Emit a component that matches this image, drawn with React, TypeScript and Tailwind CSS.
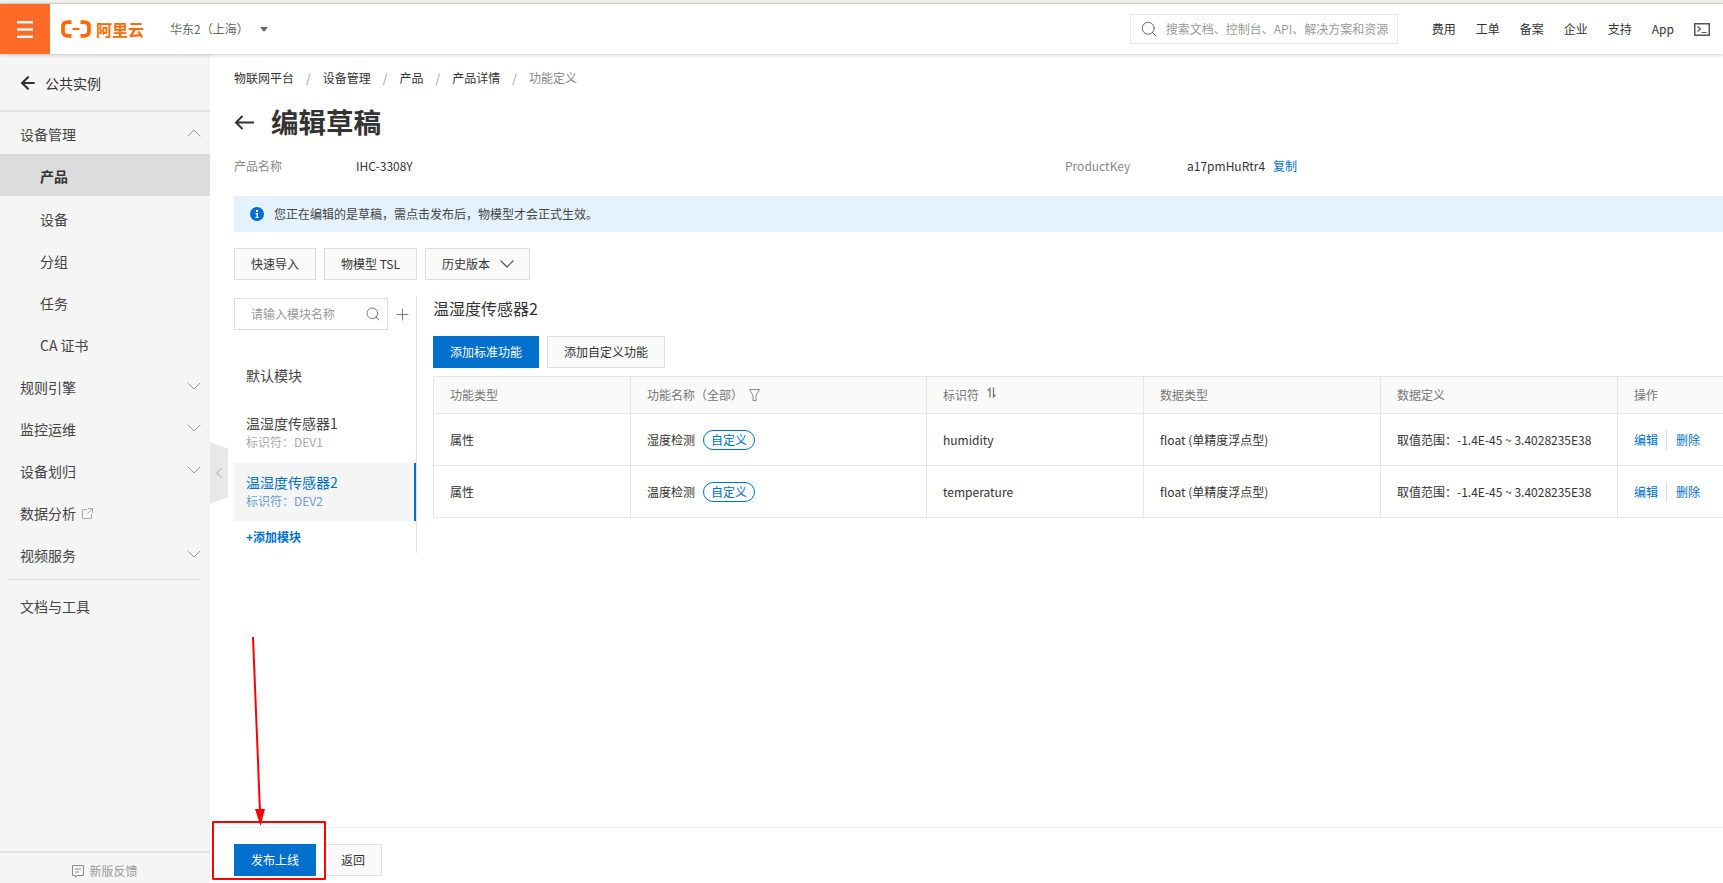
import { ArrowLeft, ChevronDown, ChevronLeft, ChevronUp, Plus, Search } from "lucide-react";

const FONT = "font-['Noto_Sans_CJK_SC','Noto_Sans',sans-serif]";

const topLinks = ["费用", "工单", "备案", "企业", "支持", "App"];
const crumbs = ["物联网平台", "设备管理", "产品", "产品详情"];
const deviceItems = ["设备", "分组", "任务", "CA 证书"];
const menuItems = [
  { label: "规则引擎", arrow: true },
  { label: "监控运维", arrow: true },
  { label: "设备划归", arrow: true },
  { label: "数据分析", arrow: false },
  { label: "视频服务", arrow: true },
];
const rows = [
  { name: "湿度检测", id: "humidity" },
  { name: "温度检测", id: "temperature" },
];

const Logo = () => (
  <div className="flex items-center gap-[5px] text-[#ff6a00]">
    <svg width="30" height="18" viewBox="0 0 30 18" fill="none" stroke="currentColor" strokeWidth="3.800">
      <path d="M10.500 2.200H7C3.800 2.200 2 4 2 6.700v4.600c0 2.700 1.800 4.500 5 4.500h3.500" />
      <path d="M19.500 2.200H23c3.200 0 5 1.800 5 4.500v4.600c0 2.700-1.800 4.500-5 4.500h-3.500" />
      <path d="M11.500 9h7" strokeWidth="2" />
    </svg>
    <span className="text-[16px] leading-none font-bold">阿里云</span>
  </div>
);

const TopBar = () => (
  <header className="relative z-10 flex h-[50px] shrink-0 items-center bg-white shadow-[0_1px_4px_rgba(0,0,0,0.2)]">
    <div className="flex h-full w-[50px] items-center justify-center bg-[#ff6a26]">
      <svg width="16" height="17" viewBox="0 0 16 17" fill="#fff">
        <rect width="16" height="2.400" />
        <rect y="7.300" width="16" height="2.400" />
        <rect y="14.600" width="16" height="2.400" />
      </svg>
    </div>
    <div className="ml-[11px]">
      <Logo />
    </div>
    <div className="ml-[26px] flex items-center text-[12px] text-[#666]">
      华东2（上海）
      <svg className="ml-[11px]" width="8" height="5" viewBox="0 0 8 5" fill="#666">
        <path d="M0 0h8L4 5z" />
      </svg>
    </div>
    <div className="ml-auto flex h-[30px] w-[268px] items-center border border-[#e8e8e8] pl-[9px] text-[12px] text-[#999]">
      <Search size={18} strokeWidth={1.3} className="text-[#666]" />
      <span className="ml-[8px] whitespace-nowrap">搜索文档、控制台、API、解决方案和资源</span>
    </div>
    <div className="ml-[34px] mr-[13px] flex items-center gap-[20px] text-[12px] text-[#333]">
      {topLinks.map((t) => (
        <span key={t}>{t}</span>
      ))}
      <svg width="16" height="13" viewBox="0 0 16 13" fill="none" stroke="#555">
        <rect x="0.750" y="0.750" width="14.500" height="11.500" strokeWidth="1.500" />
        <path d="M3.500 3.500 6.500 6l-3 2.500M7.500 9.500h5" strokeWidth="1.200" />
      </svg>
    </div>
  </header>
);

const Sidebar = () => (
  <aside className="flex w-[210px] shrink-0 flex-col bg-[#f5f5f5] text-[14px] text-[#333]">
    <div className="flex h-[58px] items-center gap-[7px] border-b-2 border-[#e3e3e3] pl-[18px] pt-[2px]">
      <ArrowLeft size={20} strokeWidth={2.6} />
      <span>公共实例</span>
    </div>
    <div className="flex h-[42px] items-center justify-between pl-[20px] pr-[4px] pt-[2px] text-[#444]">
      设备管理
      <ChevronUp size={24} strokeWidth={1} className="-mt-[2px] text-[#999]" />
    </div>
    <div className="flex h-[42px] items-center bg-[#dcdcdc] pl-[40px] pt-[2px] font-bold">产品</div>
    {deviceItems.map((t) => (
      <div key={t} className="flex h-[42px] items-center pl-[40px] pt-[5px] text-[#444]">
        {t}
      </div>
    ))}
    {menuItems.map((m) => (
      <div key={m.label} className="flex h-[42px] items-center justify-between pl-[20px] pr-[4px] pt-[5px] text-[#444]">
        <span className="flex items-center gap-[6px]">
          {m.label}
          {!m.arrow && (
            <svg width="11" height="11" viewBox="0 0 11 11" fill="none" stroke="#aaa">
              <path d="M5 1.500H.5v9h9V6M6 .5h4.500V5M10.500.5 5.500 5.500" />
            </svg>
          )}
        </span>
        {m.arrow && <ChevronDown size={24} strokeWidth={1} className="-mt-[4px] text-[#999]" />}
      </div>
    ))}
    <div className="ml-[8px] mr-[10px] mt-[5px] border-t border-[#dedede]" />
    <div className="flex h-[52px] items-center pl-[20px] text-[#444]">文档与工具</div>
    <div className="mt-auto flex h-[32px] items-center justify-center gap-[5px] border-t-2 border-[#e3e3e3] pt-[6px] text-[12px] text-[#999]">
      <svg width="12" height="13" viewBox="0 0 12 13" fill="none" stroke="#888">
        <path d="M.5.5h11v10H5L3.500 12.300V10.500h-3zM3 4h6M3 7h4" />
      </svg>
      新版反馈
    </div>
  </aside>
);

const Btn = ({ children, primary }: { children: React.ReactNode; primary?: boolean }) => (
  <button
    className={
      primary
        ? "flex h-[32px] items-center bg-[#0070cc] px-[17px] text-[12px] text-white"
        : "flex h-[32px] items-center border border-[#dedede] bg-[#fafafa] px-[16px] text-[12px] text-[#333]"
    }
  >
    {children}
  </button>
);

const ModuleList = () => (
  <div className="flex w-[183px] shrink-0 flex-col border-r border-[#e3e3e3]">
    <div className="mt-[2px] flex items-center">
      <div className="flex h-[32px] w-[154px] items-center justify-between border border-[#dedede] pl-[16px] pr-[6px] text-[12px] text-[#999]">
        请输入模块名称
        <Search size={16} strokeWidth={1.5} className="text-[#777]" />
      </div>
      <Plus size={19} strokeWidth={1.2} className="ml-[5px] text-[#777]" />
    </div>
    <div className="mt-[30px] pl-[12px] text-[14px] leading-[30px] text-[#444]">默认模块</div>
    <div className="mt-[23px] pl-[12px]">
      <div className="text-[14px] leading-[20px] text-[#444]">温湿度传感器1</div>
      <div className="text-[12px] leading-[18px] text-[#aaa]">标识符：DEV1</div>
    </div>
    <div className="mt-[12px] h-[58px] border-r-2 border-[#0070cc] bg-[#f5f5f5] pl-[12px] pt-[9px]">
      <div className="text-[14px] leading-[20px] text-[#0070cc]">温湿度传感器2</div>
      <div className="text-[12px] leading-[18px] text-[#6a9fd0]">标识符：DEV2</div>
    </div>
    <div className="mt-[7px] pl-[12px] text-[12px] leading-[18px] font-bold text-[#0070cc]">+添加模块</div>
  </div>
);

const FeatureTable = () => (
  <table className="w-[1300px] table-fixed border-collapse text-left text-[12px] text-[#333]">
    <colgroup>
      <col className="w-[197px]" />
      <col className="w-[296px]" />
      <col className="w-[217px]" />
      <col className="w-[237px]" />
      <col className="w-[237px]" />
      <col />
    </colgroup>
    <thead>
      <tr className="h-[37px] bg-[#fafafa] text-[#777]">
        <th className="border border-[#e6e6e6] pl-[16px] font-normal">功能类型</th>
        <th className="border border-[#e6e6e6] pl-[16px] font-normal">
          <span className="flex items-center gap-[6px]">
            功能名称（全部）
            <svg width="11" height="12" viewBox="0 0 11 12" fill="none" stroke="#888">
              <path d="M.5.5h10L7 6.500v5H4v-5z" />
            </svg>
          </span>
        </th>
        <th className="border border-[#e6e6e6] pl-[16px] font-normal">
          <span className="flex items-center gap-[8px]">
            标识符
            <svg className="-mt-[5px]" width="9" height="11" viewBox="0 0 9 11" fill="none" stroke="#777" strokeWidth="1.300">
              <path d="M3 10.500V1.500L.6 3.800M6.500.5v9.500l2-2.200" />
            </svg>
          </span>
        </th>
        <th className="border border-[#e6e6e6] pl-[16px] font-normal">数据类型</th>
        <th className="border border-[#e6e6e6] pl-[16px] font-normal">数据定义</th>
        <th className="border border-[#e6e6e6] pl-[16px] font-normal">操作</th>
      </tr>
    </thead>
    <tbody>
      {rows.map((r) => (
        <tr key={r.id} className="h-[52px]">
          <td className="border border-[#e6e6e6] pl-[16px]">属性</td>
          <td className="border border-[#e6e6e6] pl-[16px]">
            <span className="flex items-center gap-[8px]">
              {r.name}
              <span className="flex h-[20px] w-[52px] items-center justify-center rounded-full border border-[#0070cc] text-[#0070cc]">
                自定义
              </span>
            </span>
          </td>
          <td className="border border-[#e6e6e6] pl-[16px]">{r.id}</td>
          <td className="border border-[#e6e6e6] pl-[16px]">float (单精度浮点型)</td>
          <td className="border border-[#e6e6e6] pl-[16px]">取值范围：-1.4E-45 ~ 3.4028235E38</td>
          <td className="border border-[#e6e6e6] pl-[16px] text-[#0070cc]">
            <span className="flex items-center">
              编辑
              <span className="ml-[8px] mr-[9px] h-[20px] w-px bg-[#dedede]" />
              删除
            </span>
          </td>
        </tr>
      ))}
    </tbody>
  </table>
);

const Content = () => (
  <main className="flex min-w-0 flex-1 flex-col overflow-hidden bg-white">
    <div className="flex-1 pl-[24px]">
      <nav className="mt-[15px] flex h-[18px] items-center text-[12px] text-[#333]">
        {crumbs.map((c) => (
          <span key={c} className="flex items-center whitespace-nowrap">
            {c}
            <span className="mx-[12px] text-[#999]">/</span>
          </span>
        ))}
        <span className="text-[#888]">功能定义</span>
      </nav>
      <div className="mt-[15px] flex h-[40px] items-center gap-[17px]">
        <svg width="20" height="15" viewBox="0 0 20 15" fill="none" stroke="#333" strokeWidth="2">
          <path d="M20 7.500H2M8.500 1 2 7.500 8.500 14" />
        </svg>
        <h1 className="text-[27.5px] leading-none font-bold text-[#333]">编辑草稿</h1>
      </div>
      <div className="mt-[15px] flex h-[18px] items-center text-[12px] text-[#333]">
        <span className="w-[122px] text-[#888]">产品名称</span>
        <span className="w-[709px]">IHC-3308Y</span>
        <span className="w-[122px] text-[#888]">ProductKey</span>
        <span>a17pmHuRtr4</span>
        <span className="ml-[8px] text-[#0070cc]">复制</span>
      </div>
      <div className="mt-[21px] flex h-[36px] items-center gap-[10px] bg-[#e3f2fd] pl-[16px] text-[12px] text-[#444]">
        <svg width="14" height="14" viewBox="0 0 14 14">
          <circle cx="7" cy="7" r="7" fill="#0070cc" />
          <path d="M6 3h2v2H6zM5.500 6H8v4h1v1H5.500v-1h1V7h-1z" fill="#fff" />
        </svg>
        您正在编辑的是草稿，需点击发布后，物模型才会正式生效。
      </div>
      <div className="mt-[16px] flex gap-[8px]">
        <Btn>快速导入</Btn>
        <Btn>物模型 TSL</Btn>
        <Btn>
          历史版本
          <ChevronDown size={24} strokeWidth={1.2} className="-mr-[6px] ml-[5px] text-[#555]" />
        </Btn>
      </div>
      <div className="mt-[16px] flex h-[257px]">
        <ModuleList />
        <div className="ml-[16px] min-w-0 flex-1">
          <h2 className="flex h-[24px] items-center text-[16px] text-[#333]">温湿度传感器2</h2>
          <div className="mt-[16px] flex gap-[8px]">
            <Btn primary>添加标准功能</Btn>
            <Btn>添加自定义功能</Btn>
          </div>
          <div className="mt-[8px]">
            <FeatureTable />
          </div>
        </div>
      </div>
    </div>
    <div className="flex h-[56px] shrink-0 gap-[8px] border-t border-[#f0f0f0] pl-[24px] pt-[16px]">
      <Btn primary>发布上线</Btn>
      <Btn>返回</Btn>
    </div>
  </main>
);

export default function App() {
  return (
    <div className={`relative flex h-[883px] w-[1723px] flex-col overflow-hidden ${FONT}`}>
      <div className="h-[4px] shrink-0 border-b border-[#d8d8d8] bg-[#efefed]" />
      <TopBar />
      <div className="flex min-h-0 flex-1">
        <Sidebar />
        <Content />
      </div>

      {/* collapse handle */}
      <div className="absolute left-[210px] top-[442px] flex h-[62px] w-[18px] items-center justify-center bg-[#e8e8e8] [clip-path:polygon(0_0,100%_11%,100%_89%,0_100%)]">
        <ChevronLeft size={18} strokeWidth={1.2} className="text-[#999]" />
      </div>

      {/* red annotation */}
      <div className="absolute left-[212px] top-[821px] h-[59px] w-[114px] rounded-[1px] border-[2px] border-[#f00]" />
      <svg className="absolute left-[245px] top-[630px]" width="30" height="200" viewBox="0 0 30 200" fill="none">
        <path d="M8 7 15 182" stroke="#f00" strokeWidth="2" />
        <path d="M10 179h10l-4.500 17z" fill="#f00" />
      </svg>
    </div>
  );
}
